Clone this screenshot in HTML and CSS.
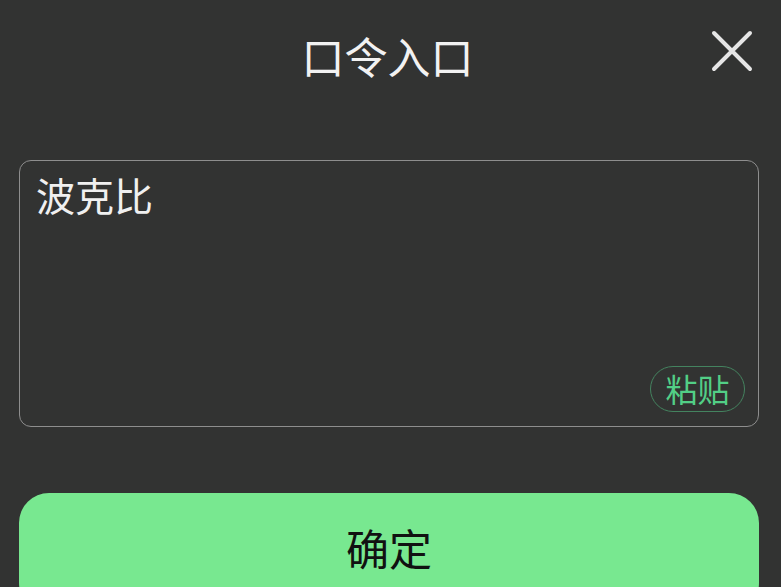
FILE: index.html
```html
<!DOCTYPE html>
<html lang="zh">
<head>
<meta charset="utf-8">
<title>口令入口</title>
<link rel="stylesheet" href="styles.css">
</head>
<body>
<div class="page">
  <header class="header">
    <div class="side"></div>
    <h1 class="title">口令入口</h1>
    <div class="side right">
      <button class="close" aria-label="关闭">
        <svg width="42" height="42" viewBox="0 0 42 42"><path d="M3 3 L39 39 M39 3 L3 39" stroke="#e6e6e6" stroke-width="4" stroke-linecap="round" fill="none"/></svg>
      </button>
    </div>
  </header>
  <div class="box">
    <div class="input">波克比</div>
    <div class="box-foot">
      <button class="paste">粘贴</button>
    </div>
  </div>
  <button class="confirm">确定</button>
</div>
</body>
</html>
```

FILE: styles.css
```css
html, body {
  margin: 0;
  padding: 0;
  background: #323332;
  height: 100%;
  overflow: hidden;
}
*, *::before, *::after {
  box-sizing: border-box;
}
.page {
  font-family: "Noto Sans CJK SC", "Noto Sans", sans-serif;
  display: flex;
  flex-direction: column;
  padding: 0 22px 0 19px;
}
.header {
  height: 116px;
  display: grid;
  grid-template-columns: 1fr auto 1fr;
  align-items: center;
  margin-right: -22px;
  margin-left: -19px;
}
.title {
  margin: 0;
  font-size: 43px;
  font-weight: 400;
  color: #f2f2f2;
  line-height: 1;
  position: relative;
  top: -3px;
  left: -3px;
}
.side.right {
  display: flex;
  justify-content: flex-end;
  padding-right: 28px;
  position: relative;
  top: -7px;
}
.close {
  background: none;
  border: 0;
  padding: 0;
  width: 42px;
  height: 42px;
  display: block;
}
.box {
  margin-top: 44px;
  height: 267px;
  border: 1px solid #8e8e8e;
  border-radius: 12px;
  display: flex;
  flex-direction: column;
  justify-content: space-between;
  padding: 10px 13px 14px 16px;
}
.input {
  font-size: 39px;
  line-height: 1.2;
  color: #f0f0f0;
}
.box-foot {
  display: flex;
  justify-content: flex-end;
}
.paste {
  font-family: inherit;
  background: transparent;
  border: 1px solid #44835f;
  border-radius: 23px;
  color: #52cf86;
  font-size: 32px;
  line-height: 1;
  height: 46px;
  width: 95px;
  padding: 0 0 2px 0;
}
.confirm {
  font-family: inherit;
  margin-top: 66px;
  height: 120px;
  flex-shrink: 0;
  border: 0;
  border-radius: 30px;
  background: #78e890;
  color: #111;
  font-size: 43px;
  line-height: 1;
  padding: 0 0 12px 0;
}
```
